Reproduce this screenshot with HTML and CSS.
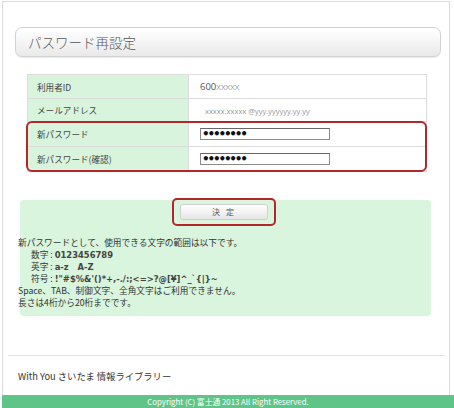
FILE: index.html
```html
<!DOCTYPE html>
<html lang="ja">
<head>
<meta charset="utf-8">
<link rel="stylesheet" href="styles.css">
</head>
<body>
<div class="page">
  <div class="title">パスワード再設定</div>
  <div class="tablewrap">
    <table class="info">
      <tr class="r1"><th>利用者ID</th><td><span class="dark">600</span><span class="light">XXXXX</span></td></tr>
      <tr class="r2"><th>メールアドレス</th><td><span class="light mail">xxxxx.xxxxx @yyy.yyyyyy.yy.yy</span></td></tr>
      <tr class="r3"><th>新パスワード</th><td><div class="pw">••••••••</div></td></tr>
      <tr class="r4"><th>新パスワード(確認)</th><td><div class="pw">••••••••</div></td></tr>
    </table>
    <div class="hl-rows"></div>
  </div>
  <div class="notice">
    <div class="btnrow">
      <div class="btnhl"><div class="btn">決 定</div></div>
    </div>
    <div class="rules">
      <p>新パスワードとして、使用できる文字の範囲は以下です。</p>
      <p class="ind">数字 : <b>0123456789</b></p>
      <p class="ind">英字 : <b>a-z&nbsp;&nbsp;&nbsp;A-Z</b></p>
      <p class="ind">符号 : <b>!"#$%&amp;'()*+,-./:;&lt;=&gt;?@[¥]^_`{|}~</b></p>
      <p>Space、TAB、制御文字、全角文字はご利用できません。</p>
      <p>長さは4桁から20桁までです。</p>
    </div>
  </div>
  <div class="divider"></div>
  <div class="sitename">With You さいたま 情報ライブラリー</div>
</div>
<div class="copyright">Copyright (C) 富士通 2013 All Right Reserved.</div>
</body>
</html>
```
FILE: styles.css
```css
html, body {
  margin: 0;
  padding: 0;
  background: #fff;
}
body {
  width: 454px;
  height: 408px;
  overflow: hidden;
  font-family: "Noto Sans CJK JP", "Noto Sans", sans-serif;
  color: #444;
}
.page {
  margin: 1px 0 0 2px;
  width: 446px;
  height: 393px;
  border: 1px solid #dcdcdc;
  border-bottom: none;
  display: flex;
  flex-direction: column;
}
.title {
  margin: 25px 0 0 12px;
  width: 412px;
  height: 28px;
  padding-left: 12px;
  border: 1px solid #d2d2d2;
  border-radius: 7px;
  background: linear-gradient(#ffffff, #f6f6f6 45%, #e9e9e9);
  box-shadow: 0 1px 1px rgba(0,0,0,0.08);
  font-size: 13.5px;
  line-height: 28px;
  color: #555;
  font-weight: 300;
}
.tablewrap {
  position: relative;
  margin: 17px 0 0 24px;
  width: 400px;
}
.info {
  border-collapse: collapse;
  width: 400px;
  font-size: 8.6px;
}
.info th, .info td {
  border: 1px solid #dcdcdc;
  padding: 0;
  vertical-align: middle;
}
.info th {
  width: 151px;
  background: #d9f4dd;
  text-align: left;
  font-weight: normal;
  padding-left: 9px;
  color: #444;
}
.info td {
  padding-left: 11px;
  background: #fff;
}
.r1 { height: 24px; }
.r2 { height: 23px; }
.r3, .r4 { height: 25px; }
.dark { color: #555; font-size: 9.5px; font-family: "Open Sans", sans-serif; }
.light { color: #999; font-size: 8px; font-family: "Open Sans", sans-serif; }
.mail { padding-left: 5px; font-size: 7.5px; }
.pw {
  width: 127px;
  height: 10px;
  border: 1px solid #8a8a8a;
  border-top-color: #666;
  font-family: "DejaVu Sans", sans-serif;
  font-size: 12px;
  font-weight: bold;
  line-height: 10px;
  letter-spacing: -2.2px;
  color: #111;
  padding-left: 1px;
  background: #fff;
  overflow: hidden;
}
.hl-rows {
  position: absolute;
  left: -1px;
  top: 47px;
  width: 397px;
  height: 47px;
  border: 2px solid #b3262a;
  border-radius: 6px;
  pointer-events: none;
}
.notice {
  margin: 28px 0 0 17px;
  width: 411px;
  height: 116px;
  background: #d9f5de;
  border-radius: 4px;
  box-sizing: border-box;
}
.btnrow {
  display: flex;
  justify-content: center;
  margin-top: -2px;
  padding-right: 3px;
}
.btnhl {
  width: 100px;
  height: 24px;
  border: 2px solid #b3262a;
  border-radius: 5px;
  display: flex;
  align-items: center;
  justify-content: center;
}
.btn {
  width: 86px;
  height: 14px;
  border: 1px solid #cfcfcf;
  border-radius: 3px;
  background: linear-gradient(#ffffff, #f3f3f3 50%, #e4e4e4);
  font-size: 8px;
  line-height: 14px;
  text-align: center;
  color: #555;
  letter-spacing: 2px;
}
.rules {
  margin-top: 11px;
  margin-left: -2px;
  font-size: 8.7px;
  line-height: 12px;
  color: #333;
}
.rules p {
  margin: 0;
  white-space: nowrap;
}
.rules .ind {
  padding-left: 13px;
}
.rules b {
  font-family: "DejaVu Sans", sans-serif;
  font-size: 8.4px;
  font-weight: bold;
  color: #444;
}
.divider {
  margin: 39px 0 0 5px;
  width: 437px;
  height: 1px;
  background: #e2e2e2;
}
.sitename {
  margin: 13px 0 0 15px;
  font-size: 9.3px;
  line-height: 14px;
  color: #333;
}
.copyright {
  margin-left: 2px;
  width: 452px;
  height: 14px;
  background: #5ec487;
  color: #fff;
  font-size: 7.8px;
  line-height: 13px;
  text-align: center;
}
```
